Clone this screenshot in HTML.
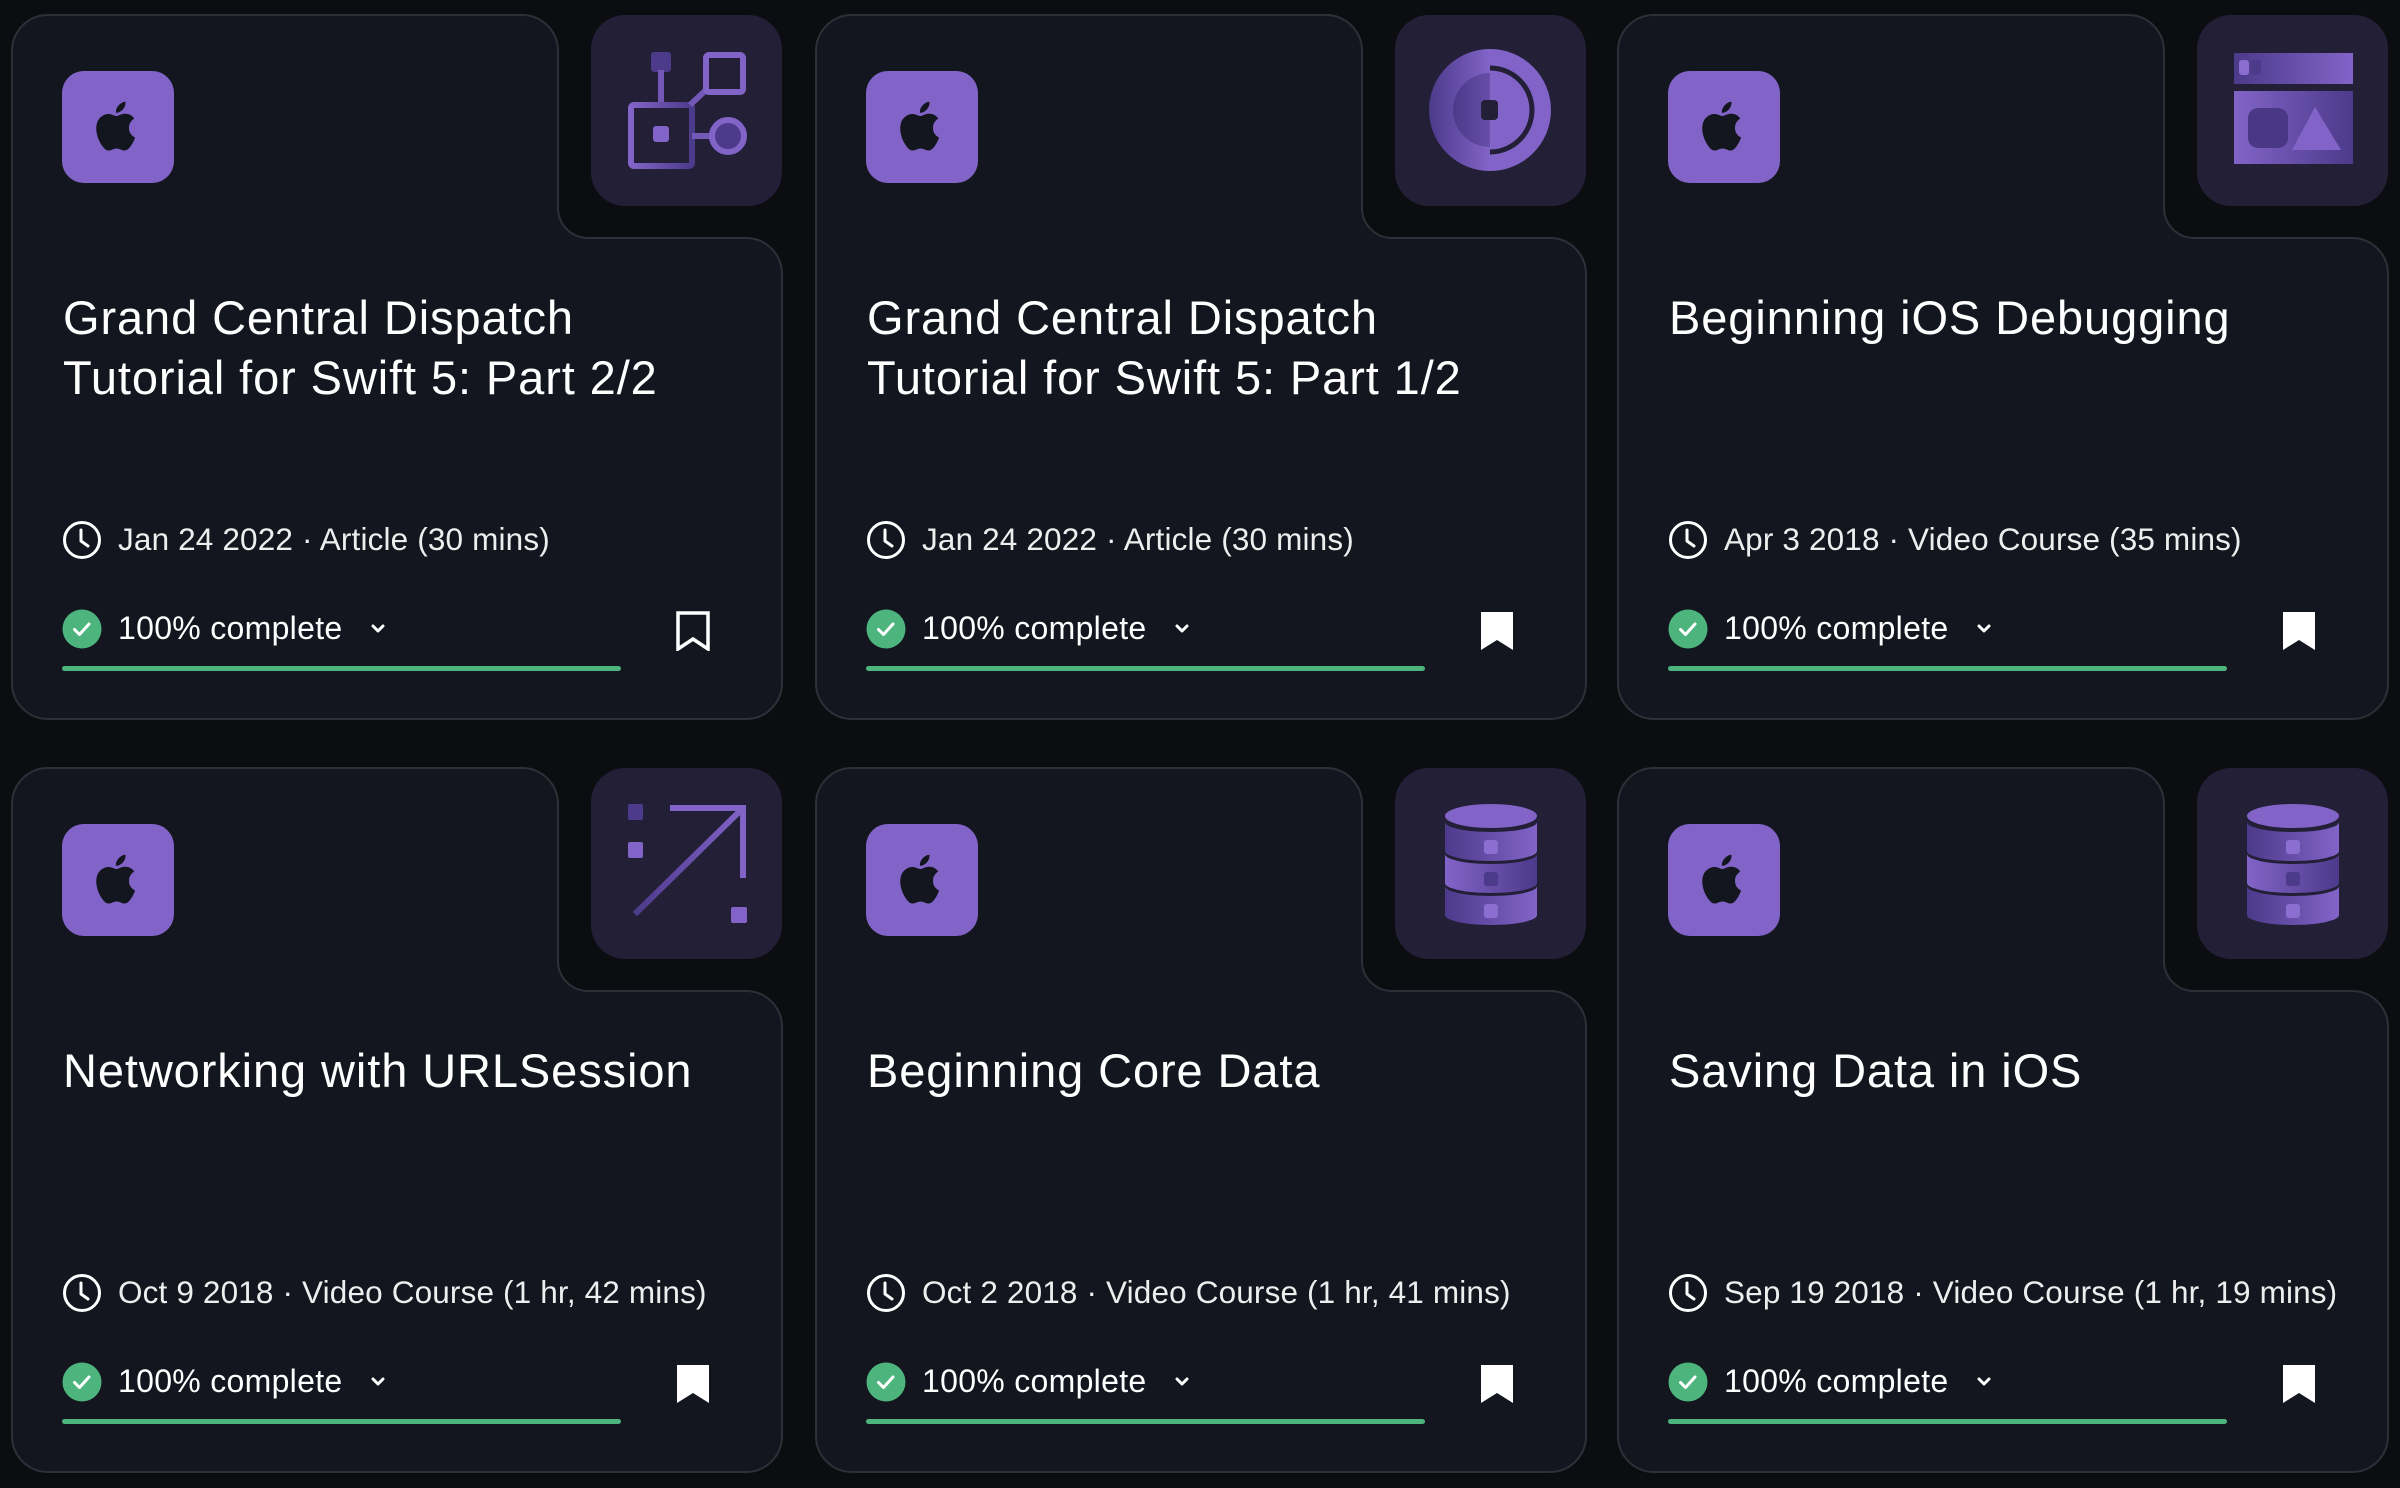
<!DOCTYPE html>
<html><head><meta charset="utf-8"><style>
*{margin:0;padding:0;box-sizing:border-box}
body{width:2400px;height:1488px;background:#0c0d11;font-family:"Liberation Sans",sans-serif;position:relative;overflow:hidden}
.card{position:absolute;width:770px;height:704px}
.bg{position:absolute;left:0;top:0}
.tile{position:absolute;left:579px;top:0;width:191px;height:191px;border-radius:34px;background:#221f37}
.tile svg{position:absolute;left:0;top:0}
.apple{position:absolute;left:50px;top:56px;width:112px;height:112px;border-radius:22px;background:#8264c8}
.apple svg{position:absolute;left:26px;top:25px}
.title{position:absolute;left:51px;top:273px;width:720px;font-size:47px;line-height:60px;color:#fff;letter-spacing:0.9px}
.meta{position:absolute;left:106px;top:504px;font-size:31.5px;line-height:40px;color:#eee;letter-spacing:0.15px}
.clock{position:absolute;left:50px;top:505px}
.check{position:absolute;left:50px;top:594px}
.prog{position:absolute;left:106px;top:593px;font-size:32px;line-height:40px;color:#fff;letter-spacing:0.3px}
.chev{position:absolute;left:356px;top:604px}
.bm{position:absolute;left:664px;top:596px}
.line{position:absolute;left:50px;top:651px;width:559px;height:5px;border-radius:3px;background:#4db47e}
</style></head><body>
<svg width="0" height="0" style="position:absolute"><defs>
<linearGradient id="gl" x1="0" x2="1"><stop offset="0" stop-color="#4c3a8a"/><stop offset="1" stop-color="#8264c8"/></linearGradient>
<linearGradient id="gr" x1="0" x2="1"><stop offset="0" stop-color="#8264c8"/><stop offset="1" stop-color="#4c3a8a"/></linearGradient>
<symbol id="cardbg" viewBox="0 0 772 706"><path d="M37,1 H511 A36,36 0 0 1 547,37 V194 A30,30 0 0 0 577,224 H735 A36,36 0 0 1 771,260 V669 A36,36 0 0 1 735,705 H37 A36,36 0 0 1 1,669 V37 A36,36 0 0 1 37,1 Z" fill="#13161e" stroke="#2c3037" stroke-width="2"/></symbol>
<symbol id="applelogo" viewBox="0 0 24 24"><path fill="#13161e" d="M16.4 12.6c0-2.4 2-3.5 2.1-3.6-1.1-1.700-2.9-1.900-3.5-1.900-1.5-.2-2.9.9-3.7.9-.8 0-1.9-.9-3.2-.8-1.6 0-3.1 1-4 2.4-1.7 3-.4 7.4 1.2 9.8.8 1.2 1.8 2.5 3 2.4 1.2 0 1.7-.8 3.1-.8 1.5 0 1.9.8 3.2.8 1.3 0 2.1-1.2 2.9-2.4.9-1.4 1.3-2.7 1.3-2.8 0 0-2.5-1-2.4-4zM14 5.3c.7-.8 1.1-1.9 1-3-1 0-2.1.7-2.8 1.5-.6.7-1.2 1.8-1 2.9 1 .1 2.1-.6 2.8-1.4z"/></symbol>
<symbol id="clk" viewBox="0 0 40 40"><circle cx="20" cy="20" r="17.5" fill="none" stroke="#fff" stroke-width="3"/><path d="M19 10 V21 L26 26" fill="none" stroke="#fff" stroke-width="3" stroke-linecap="round" stroke-linejoin="round"/></symbol>
<symbol id="chk" viewBox="0 0 40 40"><circle cx="20" cy="20" r="19.5" fill="#4db47e"/><path d="M12.5 20.5 L17.5 25.5 L27 15" fill="none" stroke="#fff" stroke-width="3" stroke-linecap="round" stroke-linejoin="round"/></symbol>
<symbol id="chv" viewBox="0 0 20 20"><path d="M5 7 L10 12 L15 7" fill="none" stroke="#fff" stroke-width="3" stroke-linecap="round" stroke-linejoin="round"/></symbol>
<symbol id="bmo" viewBox="0 0 34 40"><path d="M2 2 H32 V38 L17 28 L2 38 Z" fill="none" stroke="#fff" stroke-width="3.5" stroke-linejoin="miter"/></symbol>
<symbol id="bmf" viewBox="0 0 34 40"><path d="M1 1 H33 V39 L17 29 L1 39 Z" fill="#fff"/></symbol>
<symbol id="i1" viewBox="0 0 191 191"><rect x="60" y="37" width="20" height="20" rx="3" fill="#4c3a8a"/><rect x="67" y="55" width="6" height="34" fill="#7358b8"/><rect x="40" y="90" width="61" height="61" fill="none" stroke="url(#gr)" stroke-width="6" rx="3"/><rect x="62" y="111" width="16" height="16" rx="3" fill="#8264c8"/><path d="M99 90 L116 74" stroke="#7358b8" stroke-width="6"/><rect x="115" y="40" width="37" height="37" fill="none" stroke="#8264c8" stroke-width="6" rx="3"/><rect x="101" y="118" width="18" height="6" fill="#7358b8"/><circle cx="137" cy="121" r="16" fill="#4c3a8a" stroke="#8264c8" stroke-width="6"/></symbol>
<symbol id="i2" viewBox="0 0 191 191"><path d="M95 34 A61 61 0 0 1 95 156 Z" fill="#8264c8"/><path d="M95 34 A61 61 0 0 0 95 156 Z" fill="url(#gl)"/><path d="M95 53 A42 42 0 0 1 95 137" fill="none" stroke="#221f37" stroke-width="5"/><circle cx="95" cy="95" r="37" fill="url(#gl)"/><path d="M95 58 A37 37 0 0 1 95 132 Z" fill="#8264c8"/><rect x="86" y="85" width="17" height="20" rx="4" fill="#221f37"/></symbol>
<symbol id="i3" viewBox="0 0 191 191"><rect x="37" y="38" width="119" height="31" fill="url(#gl)"/><rect x="42" y="45" width="10" height="15" rx="3" fill="#8a6fd0"/><rect x="54" y="45" width="10" height="15" rx="3" fill="#4c3a8a"/><rect x="37" y="76" width="119" height="73" fill="url(#gr)"/><rect x="51" y="93" width="40" height="40" rx="10" fill="#4a3886"/><path d="M118 92 L144 135 H95 Z" fill="#8264c8"/></symbol>
<symbol id="i4" viewBox="0 0 191 191"><rect x="37" y="36" width="15" height="16" rx="2" fill="#4c3a8a"/><rect x="37" y="74" width="15" height="16" rx="2" fill="#8264c8"/><path d="M44 146 L152 40" stroke="url(#gl)" stroke-width="6"/><path d="M79 40 H152 V110" fill="none" stroke="#8264c8" stroke-width="6"/><rect x="140" y="139" width="16" height="16" rx="2" fill="#8264c8"/></symbol>
<symbol id="i5" viewBox="0 0 191 191"><path d="M50,118 A46,10 0 0 0 142,118 V147 A46,10 0 0 1 50,147 Z" fill="url(#gl)"/><path d="M50,86 A46,10 0 0 0 142,86 V115 A46,10 0 0 1 50,115 Z" fill="url(#gr)"/><path d="M50,54 A46,10 0 0 0 142,54 V83 A46,10 0 0 1 50,83 Z" fill="url(#gl)"/><ellipse cx="96" cy="48" rx="46" ry="12" fill="#8264c8"/><rect x="89" y="72" width="14" height="14" rx="3" fill="#8a6fd0"/><rect x="89" y="104" width="14" height="14" rx="3" fill="#4c3a8a"/><rect x="89" y="136" width="14" height="14" rx="3" fill="#8a6fd0"/></symbol>
</defs></svg>

<div class="card" style="left:12px;top:15px">
<svg class="bg" width="772" height="706" style="left:-1px;top:-1px"><use href="#cardbg"/></svg>
<div class="tile"><svg width="191" height="191"><use href="#i1"/></svg></div>
<div class="apple"><svg width="60" height="60"><use href="#applelogo"/></svg></div>
<div class="title">Grand Central Dispatch<br>Tutorial for Swift 5: Part 2/2</div>
<svg class="clock" width="40" height="40"><use href="#clk"/></svg>
<div class="meta">Jan 24 2022 · Article (30 mins)</div>
<svg class="check" width="40" height="40"><use href="#chk"/></svg>
<div class="prog">100% complete</div>
<svg class="chev" width="20" height="20"><use href="#chv"/></svg>
<svg class="bm" width="34" height="40"><use href="#bmo"/></svg>
<div class="line"></div>
</div>

<div class="card" style="left:816px;top:15px">
<svg class="bg" width="772" height="706" style="left:-1px;top:-1px"><use href="#cardbg"/></svg>
<div class="tile"><svg width="191" height="191"><use href="#i2"/></svg></div>
<div class="apple"><svg width="60" height="60"><use href="#applelogo"/></svg></div>
<div class="title">Grand Central Dispatch<br>Tutorial for Swift 5: Part 1/2</div>
<svg class="clock" width="40" height="40"><use href="#clk"/></svg>
<div class="meta">Jan 24 2022 · Article (30 mins)</div>
<svg class="check" width="40" height="40"><use href="#chk"/></svg>
<div class="prog">100% complete</div>
<svg class="chev" width="20" height="20"><use href="#chv"/></svg>
<svg class="bm" width="34" height="40"><use href="#bmf"/></svg>
<div class="line"></div>
</div>

<div class="card" style="left:1618px;top:15px">
<svg class="bg" width="772" height="706" style="left:-1px;top:-1px"><use href="#cardbg"/></svg>
<div class="tile"><svg width="191" height="191"><use href="#i3"/></svg></div>
<div class="apple"><svg width="60" height="60"><use href="#applelogo"/></svg></div>
<div class="title">Beginning iOS Debugging</div>
<svg class="clock" width="40" height="40"><use href="#clk"/></svg>
<div class="meta">Apr 3 2018 · Video Course (35 mins)</div>
<svg class="check" width="40" height="40"><use href="#chk"/></svg>
<div class="prog">100% complete</div>
<svg class="chev" width="20" height="20"><use href="#chv"/></svg>
<svg class="bm" width="34" height="40"><use href="#bmf"/></svg>
<div class="line"></div>
</div>

<div class="card" style="left:12px;top:768px">
<svg class="bg" width="772" height="706" style="left:-1px;top:-1px"><use href="#cardbg"/></svg>
<div class="tile"><svg width="191" height="191"><use href="#i4"/></svg></div>
<div class="apple"><svg width="60" height="60"><use href="#applelogo"/></svg></div>
<div class="title">Networking with URLSession</div>
<svg class="clock" width="40" height="40"><use href="#clk"/></svg>
<div class="meta">Oct 9 2018 · Video Course (1 hr, 42 mins)</div>
<svg class="check" width="40" height="40"><use href="#chk"/></svg>
<div class="prog">100% complete</div>
<svg class="chev" width="20" height="20"><use href="#chv"/></svg>
<svg class="bm" width="34" height="40"><use href="#bmf"/></svg>
<div class="line"></div>
</div>

<div class="card" style="left:816px;top:768px">
<svg class="bg" width="772" height="706" style="left:-1px;top:-1px"><use href="#cardbg"/></svg>
<div class="tile"><svg width="191" height="191"><use href="#i5"/></svg></div>
<div class="apple"><svg width="60" height="60"><use href="#applelogo"/></svg></div>
<div class="title">Beginning Core Data</div>
<svg class="clock" width="40" height="40"><use href="#clk"/></svg>
<div class="meta">Oct 2 2018 · Video Course (1 hr, 41 mins)</div>
<svg class="check" width="40" height="40"><use href="#chk"/></svg>
<div class="prog">100% complete</div>
<svg class="chev" width="20" height="20"><use href="#chv"/></svg>
<svg class="bm" width="34" height="40"><use href="#bmf"/></svg>
<div class="line"></div>
</div>

<div class="card" style="left:1618px;top:768px">
<svg class="bg" width="772" height="706" style="left:-1px;top:-1px"><use href="#cardbg"/></svg>
<div class="tile"><svg width="191" height="191"><use href="#i5"/></svg></div>
<div class="apple"><svg width="60" height="60"><use href="#applelogo"/></svg></div>
<div class="title">Saving Data in iOS</div>
<svg class="clock" width="40" height="40"><use href="#clk"/></svg>
<div class="meta">Sep 19 2018 · Video Course (1 hr, 19 mins)</div>
<svg class="check" width="40" height="40"><use href="#chk"/></svg>
<div class="prog">100% complete</div>
<svg class="chev" width="20" height="20"><use href="#chv"/></svg>
<svg class="bm" width="34" height="40"><use href="#bmf"/></svg>
<div class="line"></div>
</div>
</body></html>
